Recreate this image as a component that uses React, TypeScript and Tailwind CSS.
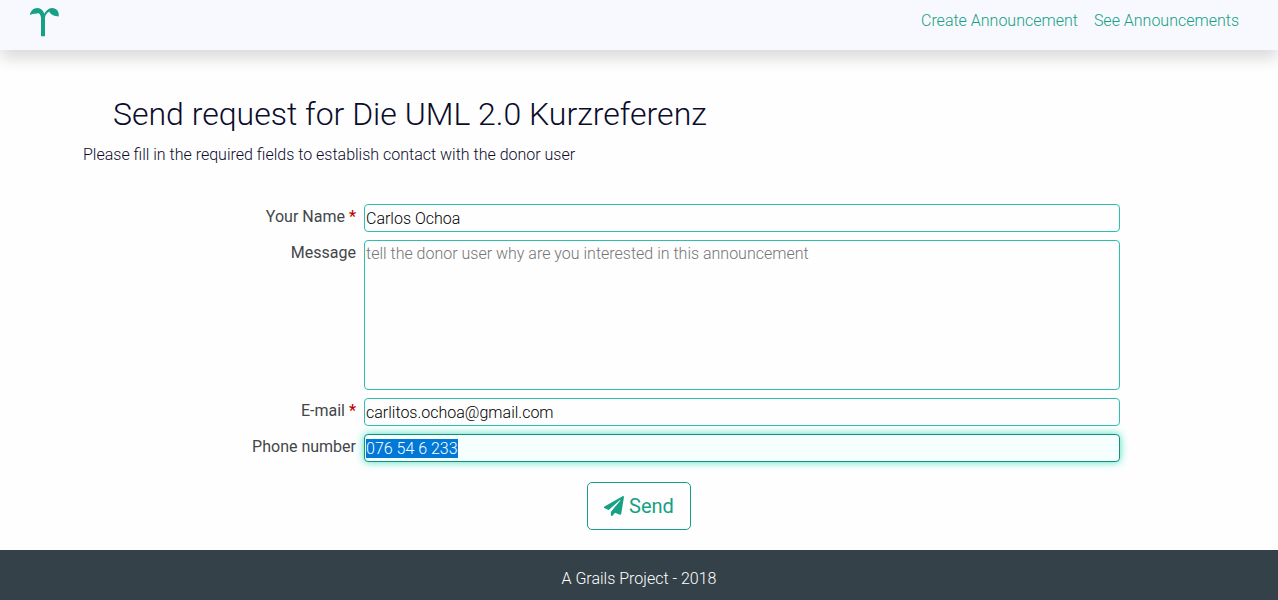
import React, { useEffect, useRef } from "react";
import { FaPaperPlane } from "react-icons/fa";

const field =
  "block w-full rounded-[4px] border border-[#2dbfad] bg-[#fefefe] px-px text-base leading-6 font-light text-black outline-none placeholder:text-[#757575]";
const label = "pt-px text-right text-base leading-6 font-normal text-[#424649]";

function Required() {
  return <span className="font-medium text-[#c00000]"> *</span>;
}

export default function App() {
  const phone = useRef<HTMLInputElement>(null);
  useEffect(() => {
    phone.current?.focus();
    phone.current?.select();
  }, []);

  return (
    <div className="flex min-h-screen flex-col bg-[#fefefe] font-['Roboto',sans-serif] text-base font-light text-[#0b0b2b]">
      <header className="flex h-[50px] items-start justify-between bg-[#f8f9fe] pr-[39px] pl-7 shadow-[0_8px_16px_rgba(0,0,0,0.15)]">
        <a href="#" aria-label="Home" className="pt-1">
          <svg viewBox="0 0 34 36" className="h-9 w-[34px]" fill="#16a085">
            <path d="M13 32.3V13.6C12.7 11.6 12 10.2 10.8 9.2C8.7 9.6 5.2 9.3 2 11C2.4 6.8 5.4 4 9.5 4C13.2 4.2 15.6 7 16.2 9.8C18 7 20.3 4.2 24 4C28.8 4.1 31.4 7.6 30.7 12.5C26.8 12 22.8 11.2 21.2 7.5C18.8 8.8 17 11 17 14.2V32.3Z" />
          </svg>
        </a>
        <nav className="flex gap-4 pt-[9px] text-[#16a085]">
          <a href="#create">Create Announcement</a>
          <a href="#announcements">See Announcements</a>
        </nav>
      </header>
      <main className="flex-1 px-[83px] pt-[45px] pb-5">
        <h1 className="pl-[30px] text-[32px] leading-[38px] font-light">Send request for Die UML 2.0 Kurzreferenz</h1>
        <p className="mt-[10px] leading-6">Please fill in the required fields to establish contact with the donor user</p>
        <form className="mt-[37px]" onSubmit={(e) => e.preventDefault()}>
          <div className="grid grid-cols-[273px_1fr] gap-x-2 gap-y-2 pr-[75px]">
            <label htmlFor="name" className={label}>Your Name<Required /></label>
            <input id="name" required className={`${field} h-7`} defaultValue="Carlos Ochoa" />
            <label htmlFor="message" className={label}>Message</label>
            <textarea id="message" className={`${field} h-[150px] resize-none pt-px`} placeholder="tell the donor user why are you interested in this announcement" />
            <label htmlFor="email" className={label}>E-mail<Required /></label>
            <input id="email" type="email" required className={`${field} h-7`} defaultValue="carlitos.ochoa@gmail.com" />
            <label htmlFor="phone" className={label}>Phone number</label>
            <input id="phone" ref={phone} className={`${field} h-7 selection:bg-[#0078d7] selection:text-white focus:border-[#16907c] focus:bg-[#f5fffd] focus:shadow-[0_0_8px_#40e0c0]`} defaultValue="076 54 6 233" />
          </div>
          <div className="mt-5 flex justify-center">
            <button type="submit" className="flex h-12 items-center gap-[5px] rounded-[5px] border border-[#16a085] bg-[#fefefe] px-4 text-xl font-normal text-[#16a085]">
              <FaPaperPlane /> Send
            </button>
          </div>
        </form>
      </main>
      <footer className="flex h-[50px] items-center justify-center bg-[#354149] pt-2 text-white">A Grails Project - 2018</footer>
    </div>
  );
}
